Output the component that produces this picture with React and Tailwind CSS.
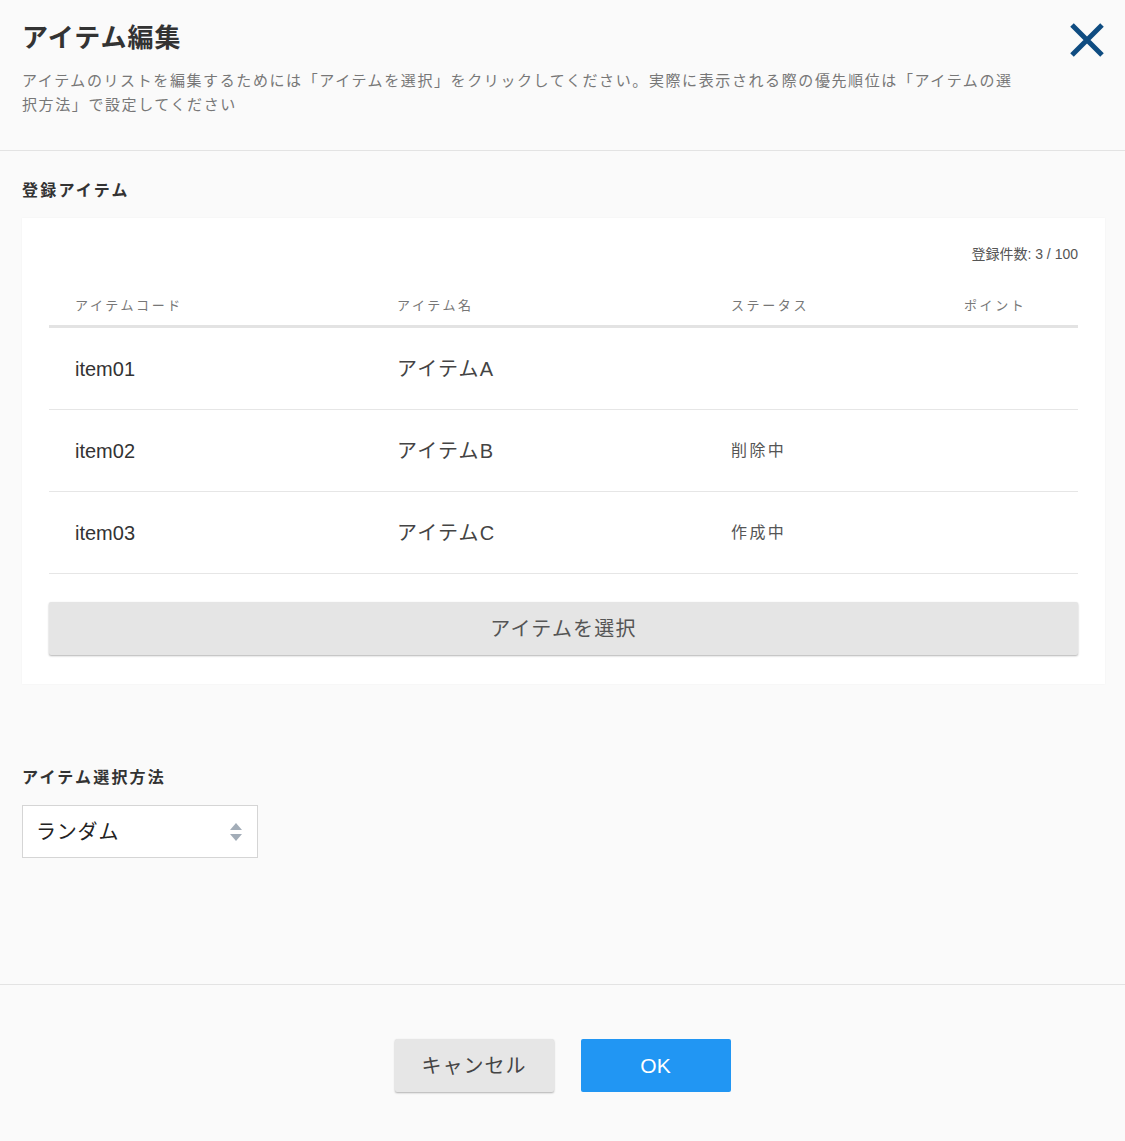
import { useState } from 'react';

const rows = [
  { code: 'item01', name: 'アイテムA', status: '', point: '' },
  { code: 'item02', name: 'アイテムB', status: '削除中', point: '' },
  { code: 'item03', name: 'アイテムC', status: '作成中', point: '' },
];

const font = { fontFamily: '"Liberation Sans", "Noto Sans CJK JP", sans-serif' };

export default function App() {
  const [method, setMethod] = useState('random');

  return (
    <div style={font} className="min-h-[1141px] bg-[#fafafa] text-[#333] flex flex-col">
      {/* Header */}
      <div className="relative px-[22px] pt-[20px] pb-[33px] border-b border-[#e3e3e3]">
        <h1 className="text-[26px] leading-[36px] font-bold text-[#333] tracking-[1px]">アイテム編集</h1>
        <p className="mt-[13px] max-w-[1000px] text-[15px] leading-[24px] text-[#777] tracking-[1.6px]">
          アイテムのリストを編集するためには「アイテムを選択」をクリックしてください。実際に表示される際の優先順位は「アイテムの選択方法」で設定してください
        </p>
        <button className="absolute right-[20px] top-[22px] w-[36px] h-[36px]" aria-label="close">
          <svg viewBox="0 0 36 36" width="36" height="36">
            <path d="M3 3 L33 33 M33 3 L3 33" stroke="#0f4c81" strokeWidth="5" fill="none" />
          </svg>
        </button>
      </div>

      {/* Body */}
      <div className="pl-[22px] pr-[20px] pt-[28px] pb-[126px] border-b border-[#e3e3e3]">
        <h2 className="text-[16px] leading-[24px] font-bold text-[#333] tracking-[2.2px]">登録アイテム</h2>
        <div className="mt-[15px] bg-white px-[27px] pt-[26px] pb-[29px] shadow-[0_0_2px_rgba(0,0,0,0.04)]">
          <div className="text-right text-[14px] leading-[20px] text-[#555]">登録件数: 3 / 100</div>
          <div className="mt-[32px] grid grid-cols-[322px_334px_233px_1fr] border-b-[3px] border-[#e3e3e3] pb-[9px] text-[13px] leading-[20px] text-[#777] tracking-[2.6px]">
            <div className="pl-[26px]">アイテムコード</div>
            <div className="pl-[26px]">アイテム名</div>
            <div className="pl-[26px]">ステータス</div>
            <div className="pl-[26px]">ポイント</div>
          </div>
          {rows.map((r) => (
            <div
              key={r.code}
              className="grid grid-cols-[322px_334px_233px_1fr] items-center h-[82px] border-b border-[#e6e6e6]"
            >
              <div className="pl-[26px] text-[20px] text-[#333]">{r.code}</div>
              <div className="pl-[26px] text-[20px] text-[#444] tracking-[1.2px]">{r.name}</div>
              <div className="pl-[26px] text-[16px] text-[#555] tracking-[2.4px]">{r.status}</div>
              <div className="pl-[26px] text-[16px] text-[#555]">{r.point}</div>
            </div>
          ))}
          <button className="mt-[28px] w-full h-[53px] bg-[#e5e5e5] rounded-[2px] shadow-[0_1px_2px_rgba(0,0,0,0.3)] text-[20px] text-[#555] tracking-[1.2px]">
            アイテムを選択
          </button>
        </div>

        <h2 className="mt-[82px] text-[16px] leading-[24px] font-bold text-[#333] tracking-[2.2px]">アイテム選択方法</h2>
        <div className="mt-[15px] relative w-[236px] h-[53px] bg-white border border-[#d5d5d5]">
          <select
            value={method}
            onChange={(e) => setMethod(e.target.value)}
            className="appearance-none w-full h-full bg-transparent pl-[13px] pr-[40px] text-[20px] text-[#222] tracking-[0.8px] outline-none"
          >
            <option value="random">ランダム</option>
            <option value="order">登録順</option>
          </select>
          <svg className="absolute right-[14px] top-[16px] pointer-events-none" width="14" height="20" viewBox="0 0 14 20">
            <path d="M7 1 L13 8 L1 8 Z" fill="#a3adb8" />
            <path d="M1 12 L13 12 L7 19 Z" fill="#a3adb8" />
          </svg>
        </div>
      </div>

      {/* Footer */}
      <div className="flex justify-center gap-[27px] pt-[54px] pb-[48px]">
        <button className="w-[159px] h-[53px] bg-[#e6e6e6] rounded-[2px] shadow-[0_1px_2px_rgba(0,0,0,0.3)] text-[20px] text-[#444] tracking-[1px]">
          キャンセル
        </button>
        <button className="w-[150px] h-[53px] bg-[#2196f3] rounded-[2px] text-[21px] text-white">
          OK
        </button>
      </div>
    </div>
  );
}
